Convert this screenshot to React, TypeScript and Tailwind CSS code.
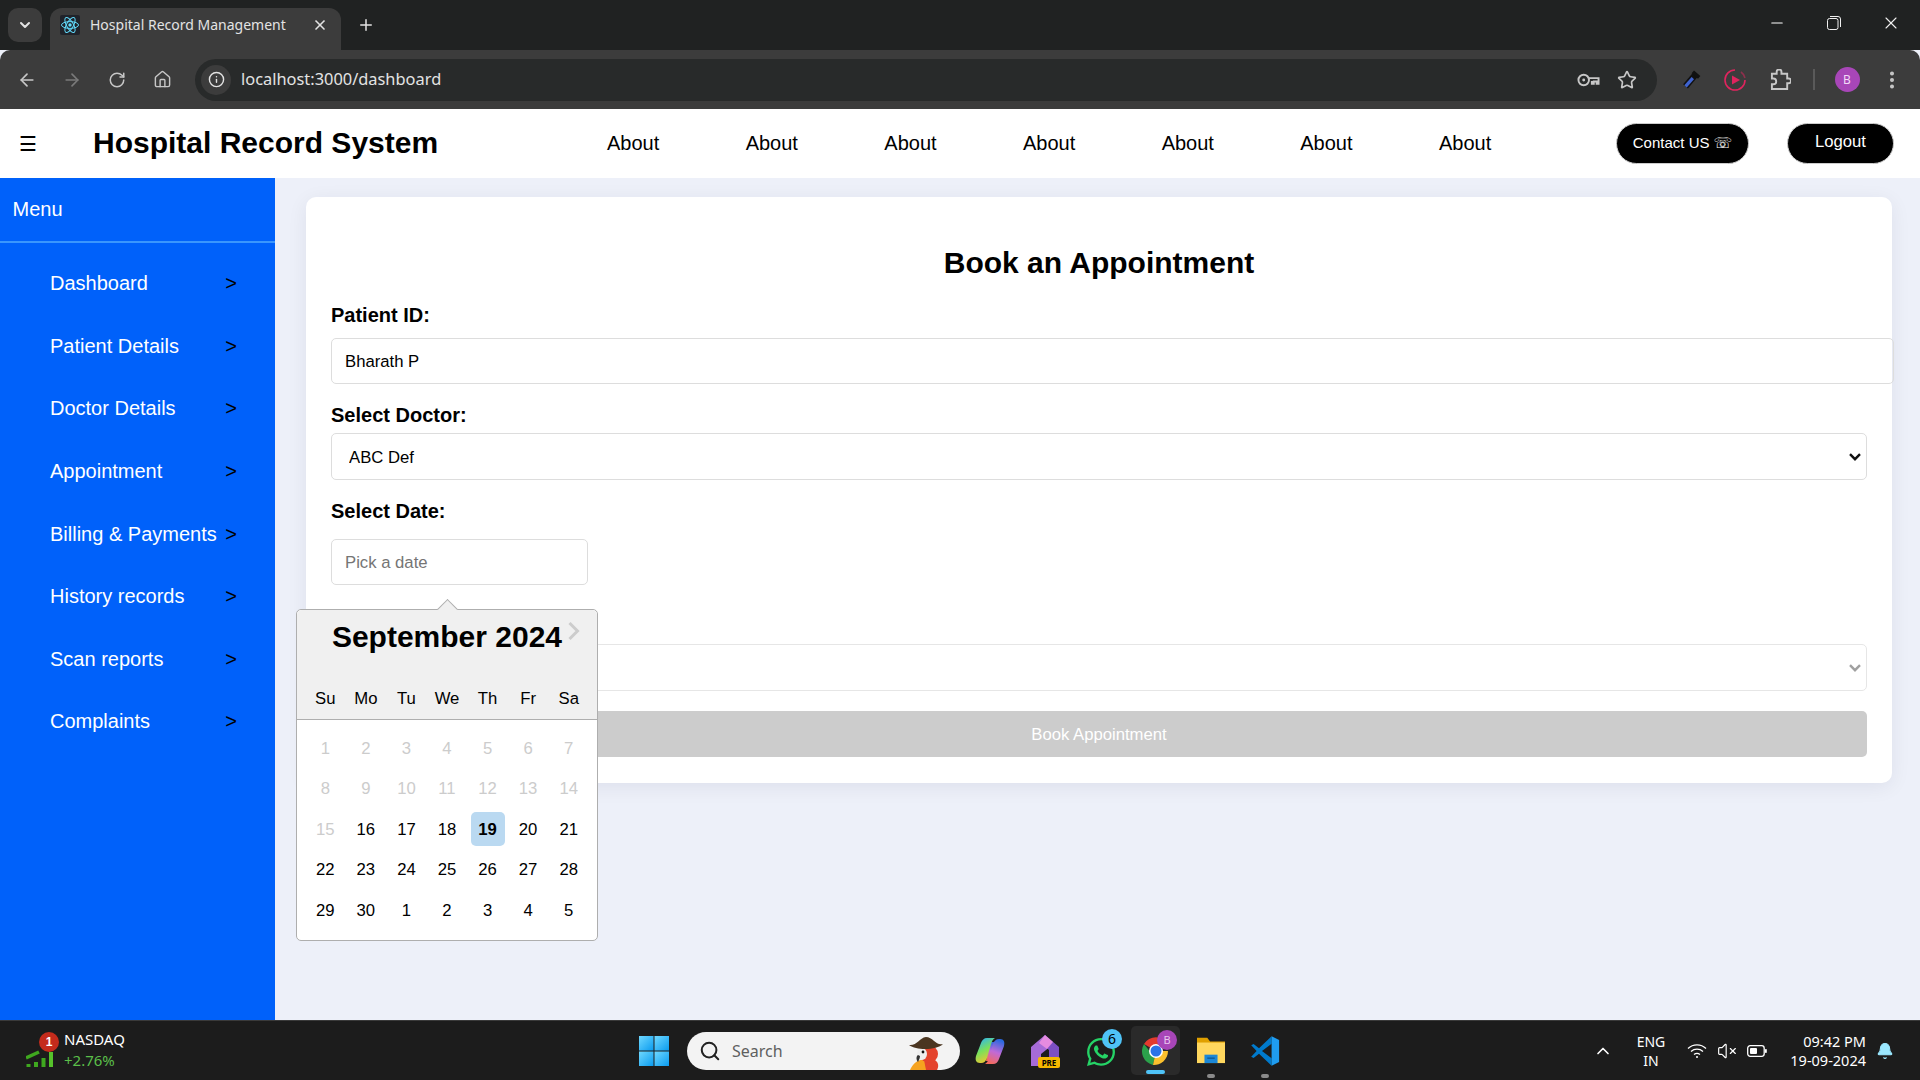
import React from 'react';
import { ArrowLeft, ArrowRight, RotateCw, Home, Info, Star, EllipsisVertical, X, Plus, ChevronDown, ChevronUp, Minus, Search, VolumeX, Bell } from 'lucide-react';
import { FaWhatsapp } from 'react-icons/fa';

const menuItems = ['Dashboard', 'Patient Details', 'Doctor Details', 'Appointment', 'Billing & Payments', 'History records', 'Scan reports', 'Complaints'];
const navItems = ['About', 'About', 'About', 'About', 'About', 'About', 'About'];
const dayNames = ['Su', 'Mo', 'Tu', 'We', 'Th', 'Fr', 'Sa'];
const days = [1, 2, 3, 4, 5, 6, 7, 8, 9, 10, 11, 12, 13, 14, 15, 16, 17, 18, 19, 20, 21, 22, 23, 24, 25, 26, 27, 28, 29, 30, 1, 2, 3, 4, 5];

const ReactFavicon = () => (
  <svg viewBox="0 0 20 20" className="w-5 h-5">
    <rect width="20" height="20" rx="2" fill="#20232a" />
    <g fill="none" stroke="#61dafb" strokeWidth="1">
      <ellipse cx="10" cy="10" rx="8.5" ry="3.4" />
      <ellipse cx="10" cy="10" rx="8.5" ry="3.4" transform="rotate(60 10 10)" />
      <ellipse cx="10" cy="10" rx="8.5" ry="3.4" transform="rotate(120 10 10)" />
    </g>
    <circle cx="10" cy="10" r="1.7" fill="#61dafb" />
  </svg>
);

const TabStrip = () => (
  <div className="h-[50px] bg-[#202222] flex items-end shrink-0">
    <div className="w-[34px] h-[34px] ml-[8px] mb-[8px] bg-[#3c3c3c] rounded-[10px] flex items-center justify-center">
      <ChevronDown className="w-4 h-4 text-[#e3e3e3]" strokeWidth={3} />
    </div>
    <div className="relative w-[291px] h-[42px] ml-[8px] bg-[#3c3c3c] rounded-t-[12px] flex items-center pl-[10px] pb-[8px]">
      <ReactFavicon />
      <span className="ml-[10px] text-[14px] leading-[20px] text-[#e3e3e3] font-['Noto_Sans'] whitespace-nowrap">Hospital Record Management</span>
      <X className="absolute left-[262px] top-[9px] w-[16px] h-[16px] text-[#e3e3e3]" strokeWidth={2.5} />
    </div>
    <Plus className="w-[18px] h-[18px] ml-[16px] mb-[16px] text-[#e3e3e3]" strokeWidth={2} />
    <div className="ml-auto flex items-center mb-[17px]">
      <Minus className="w-[18px] h-[18px] text-[#ffffff] mr-[41px]" strokeWidth={1.4} />
      <svg viewBox="0 0 14 14" className="w-[14px] h-[14px] mr-[40px]" fill="none" stroke="#f0f0f0" strokeWidth="1">
        <rect x="0.5" y="2.5" width="10.5" height="11" rx="2" />
        <path d="M3 .5h8a2.5 2.5 0 0 1 2.5 2.5v8" />
      </svg>
      <X className="w-[20px] h-[20px] text-[#f0f0f0] mr-[19px]" strokeWidth={1.3} />
    </div>
  </div>
);

const Toolbar = () => (
  <div className="h-[59px] bg-[#3c3c3c] flex items-center shrink-0 rounded-t-[10px]">
    <ArrowLeft className="w-[20px] h-[20px] ml-[17px] text-[#c7c7c7]" strokeWidth={2} />
    <ArrowRight className="w-[20px] h-[20px] ml-[25px] text-[#7a7a7a]" strokeWidth={2} />
    <RotateCw className="w-[18px] h-[18px] ml-[26px] text-[#c7c7c7]" strokeWidth={2} />
    <Home className="w-[19px] h-[19px] ml-[27px] text-[#c7c7c7]" strokeWidth={1.8} />
    <div className="w-[1462px] h-[42px] ml-[23px] bg-[#282a2a] rounded-full flex items-center pl-[6px] pr-[20px]">
      <div className="w-[30px] h-[30px] bg-[#3c3c3c] rounded-full flex items-center justify-center">
        <Info className="w-[17px] h-[17px] text-[#e3e3e3]" strokeWidth={2} />
      </div>
      <span className="ml-[10px] text-[#e3e3e3] text-[16.4px] font-['Noto_Sans']">localhost:3000/dashboard</span>
      <svg viewBox="0 0 24 14" className="w-[23px] h-[14px] ml-auto" fill="none" stroke="#c7c7c7" strokeWidth="2">
        <circle cx="7" cy="7" r="5.5" />
        <circle cx="7" cy="7" r="1.5" fill="#c7c7c7" stroke="none" />
        <path d="M12.5 5h10v6h-2V8.5h-3V11h-2V8" />
      </svg>
      <Star className="w-[20px] h-[20px] ml-[17px] text-[#c7c7c7]" strokeWidth={2} />
    </div>
    {/* extensions */}
    <svg viewBox="0 0 22 24" className="w-[20px] h-[22px] ml-[24px]" fill="none">
      <path d="M16 6L5 19" stroke="#111" strokeWidth="7" />
      <path d="M13 10L5 19" stroke="#3f63cf" strokeWidth="3.5" />
      <path d="M13 3l7 6" stroke="#111" strokeWidth="4" />
    </svg>
    <svg viewBox="0 0 22 22" className="w-[22px] h-[22px] ml-[23px]" fill="none">
      <path d="M11 1a10 10 0 1 0 10 10" stroke="#e0245e" strokeWidth="1.6" />
      <path d="M17 3a10 10 0 0 1 4 6" stroke="#e0245e" strokeWidth="1.6" opacity="0.5" />
      <path d="M8 6.5l8 4.5-8 4.5z" fill="#e0245e" />
    </svg>
    <svg viewBox="0 0 22 22" className="w-[21px] h-[21px] ml-[24px]" fill="none" stroke="#c7c7c7" strokeWidth="2">
      <path d="M2 5h5V3a2.5 2.5 0 0 1 5 0v2h6v5h1.5a2.5 2.5 0 0 1 0 5H18v6H2v-5h1.5a2.5 2.5 0 0 0 0-6H2z" />
    </svg>
    <div className="w-[1.5px] h-[21px] bg-[#5a5a5a] ml-[22px]" />
    <div className="w-[25px] h-[25px] ml-[20px] rounded-full bg-[#a846b8] flex items-center justify-center text-[12px] text-[#f3d9f7] font-['Noto_Sans']">B</div>
    <EllipsisVertical className="w-[22px] h-[22px] ml-[21px] text-[#c7c7c7]" strokeWidth={2.4} />
  </div>
);

const Header = () => (
  <div className="h-[69px] bg-white flex items-center shrink-0 text-black">
    <div className="w-[93px] pl-[19px] text-[20px] leading-none">☰</div>
    <h1 className="w-[514px] -mt-px text-[30px] font-bold leading-[36px] whitespace-nowrap">Hospital Record System</h1>
    <nav className="flex -mt-px gap-[86.4px] text-[20px]">
      {navItems.map((item, i) => (
        <a key={i}>{item}</a>
      ))}
    </nav>
    <button className="ml-auto w-[133px] h-[41px] rounded-full bg-black text-white text-[15px] flex items-center justify-center border border-[#ccc]">
      Contact US <span className="ml-1 text-[15px] font-['DejaVu_Sans']">☏</span>
    </button>
    <button className="ml-[38px] mr-[26px] w-[107px] h-[41px] rounded-full bg-black text-white text-[16.7px] pb-[3px] border border-[#ccc]">Logout</button>
  </div>
);

const Sidebar = () => (
  <aside className="w-[275px] bg-[#0061fa] text-white shrink-0">
    <div className="h-[65px] pl-[12.5px] flex items-center pb-[2px] text-[20px] border-b-2 border-[#3a96fd]">Menu</div>
    <ul className="mt-[9px]">
      {menuItems.map((item) => (
        <li key={item} className="h-[62.6px] pl-[50px] pr-[38px] flex items-center justify-between text-[20px] whitespace-nowrap">
          <span>{item}</span>
          <span className="text-black">&gt;</span>
        </li>
      ))}
    </ul>
  </aside>
);

const DatePopup = () => (
  <div className="absolute left-[-35px] top-[70px] z-10 w-[302px] h-[332px] bg-white border border-[#aeaeae] rounded-[5px] text-black">
    <div className="absolute left-[143px] top-[-8px] w-[15px] h-[15px] rotate-45 bg-[#f0f0f0] border-l border-t border-[#aeaeae]" />
    <div className="relative h-[110px] bg-[#f0f0f0] border-b border-[#aeaeae] rounded-t-[5px]">
      <div className="pt-[10px] text-[30px] font-bold leading-[34px] text-center">September 2024</div>
      <svg viewBox="0 0 12 20" className="absolute right-[17px] top-[11px] w-[13px] h-[20px]" fill="none" stroke="#ccc" strokeWidth="3">
        <path d="M2 2l8 8-8 8" />
      </svg>
      <div className="mt-[34.5px] px-[8px] grid grid-cols-7 text-[16.7px] leading-[20px] text-center">
        {dayNames.map((name) => (
          <div key={name}>{name}</div>
        ))}
      </div>
    </div>
    <div className="pt-[8px] px-[8px] grid grid-cols-7 auto-rows-[40.5px] text-[16.7px]">
      {days.map((day, i) => (
        <div key={i} className="flex items-center justify-center">
          <span
            className={
              i === 18
                ? 'w-[34px] h-[34px] flex items-center justify-center rounded-[5px] bg-[#bad9f1] font-bold'
                : i < 15
                ? 'text-[#ccc]'
                : ''
            }
          >
            {day}
          </span>
        </div>
      ))}
    </div>
  </div>
);

const SelectArrow = ({ color }: { color: string }) => (
  <svg viewBox="0 0 12 8" className="absolute right-[6px] top-[20px] w-[12px] h-[8px] pointer-events-none" fill="none" stroke={color} strokeWidth="2.4">
    <path d="M1 1.2l5 5 5-5" />
  </svg>
);

const AppointmentForm = () => (
  <div className="bg-white rounded-[10px] shadow-[0_4px_20px_rgba(0,0,60,0.07)] h-[586px] px-[25px] text-black">
    <h2 className="pt-[48px] text-[30px] font-bold leading-[36px] text-center">Book an Appointment</h2>
    <label className="block mt-[23px] text-[20px] font-bold leading-[23px]">Patient ID:</label>
    <input
      readOnly
      value="Bharath P"
      className="block mt-[11px] w-[calc(100%+27px)] h-[46px] px-[13px] pt-[2px] border border-[#ddd] rounded-[5px] text-[16.7px] outline-none"
    />
    <label className="block mt-[20px] text-[20px] font-bold leading-[23px]">Select Doctor:</label>
    <div className="relative mt-[6px]">
      <select className="block w-full h-[47px] px-[17px] pt-[2px] appearance-none border border-[#ddd] rounded-[5px] text-[16.7px] bg-white outline-none">
        <option>ABC Def</option>
      </select>
      <SelectArrow color="#111" />
    </div>
    <label className="block mt-[20px] text-[20px] font-bold leading-[23px]">Select Date:</label>
    <div className="relative mt-[16px] w-[257px]">
      <input
        readOnly
        placeholder="Pick a date"
        className="block w-full h-[46px] px-[13px] pt-[2px] border border-[#ddd] rounded-[5px] text-[16.7px] outline-none placeholder:text-[#757575]"
      />
      <DatePopup />
    </div>
    {/* the time label sits behind the open calendar */}
    <div className="mt-[29px] h-[23px]" />
    <div className="relative mt-[7px]">
      <select disabled className="block w-full h-[47px] px-[17px] appearance-none border border-[#e6e6e6] rounded-[5px] text-[16.7px] bg-white opacity-100 outline-none">
        <option></option>
      </select>
      <SelectArrow color="#a0a0a0" />
    </div>
    <button disabled className="block mt-[20px] w-full h-[46px] pt-[2px] bg-[#ccc] text-white text-[16.7px] rounded-[5px]">Book Appointment</button>
  </div>
);

const Taskbar = () => (
  <div className="h-[60px] bg-[#1c1c1c] border-t border-[#3a3a3a] flex items-center shrink-0 text-white">
    {/* stock widget */}
    <div className="relative w-[38px] h-[38px] ml-[26px] mr-0">
      <svg viewBox="0 0 28 18" className="absolute left-0 top-[17px] w-[28px] h-[18px]">
        <path d="M0 9l13-6" stroke="#3fa81f" strokeWidth="3.5" fill="none" />
        <rect x="0.5" y="15" width="4" height="3" fill="#3fa81f" />
        <rect x="8" y="13" width="4" height="5" fill="#3fa81f" />
        <rect x="15.5" y="9" width="4" height="9" fill="#3fa81f" />
        <rect x="23" y="3" width="4" height="15" fill="#56c22b" />
      </svg>
      <div className="absolute left-[13px] top-0 w-[20px] h-[20px] rounded-full bg-[#c42b1c] flex items-center justify-center text-[12px] font-bold">1</div>
    </div>
    <div className="w-[575px] font-['Noto_Sans'] text-[15px] leading-[21px] -mt-[2px]">
      <div>NASDAQ</div>
      <div className="text-[#5bbf4a]">+2.76%</div>
    </div>
    {/* start */}
    <svg viewBox="0 0 30 30" className="w-[30px] h-[30px]">
      <defs>
        <linearGradient id="win" x1="0" y1="0" x2="1" y2="1">
          <stop offset="0" stopColor="#6fd8ff" />
          <stop offset="1" stopColor="#0a9bef" />
        </linearGradient>
      </defs>
      <rect x="0" y="0" width="14.5" height="14.5" fill="url(#win)" />
      <rect x="15.5" y="0" width="14.5" height="14.5" fill="url(#win)" />
      <rect x="0" y="15.5" width="14.5" height="14.5" fill="url(#win)" />
      <rect x="15.5" y="15.5" width="14.5" height="14.5" fill="url(#win)" />
    </svg>
    {/* search */}
    <div className="relative w-[273px] h-[38px] ml-[18px] bg-[#f3f3f3] rounded-full flex items-center pl-[12px] text-[#5f5f5f] overflow-hidden">
      <Search className="w-[22px] h-[22px] text-[#222]" strokeWidth={2.2} />
      <span className="ml-[11px] text-[16px] font-['Noto_Sans']">Search</span>
      <svg viewBox="0 0 34 36" className="absolute left-[222px] top-[2px] w-[34px] h-[36px]">
        <path d="M10 36C10 26 24 22 28 28c2 3 1 6 0 8z" fill="#e4432d" />
        <path d="M1 36c3-7 9-11 14-10l2 10z" fill="#f6a31f" />
        <ellipse cx="20" cy="20" rx="9" ry="9" fill="#e4432d" />
        <ellipse cx="13" cy="20" rx="5" ry="6" fill="#eeeeee" />
        <circle cx="14" cy="18" r="1.4" fill="#111" />
        <path d="M9 21c-2 1-2 5 0 7 1-2 2-4 2-6z" fill="#333" />
        <path d="M0 11C8 12 10 4 17 3c7 0 10 9 17 7-6 6-26 7-34 1z" fill="#4b3621" />
      </svg>
    </div>
    {/* pinned apps */}
    <svg viewBox="0 0 30 30" className="w-[30px] h-[30px] ml-[15px]">
      <defs>
        <linearGradient id="cop1" x1="0.2" y1="0" x2="0.6" y2="1">
          <stop offset="0" stopColor="#2bb5f5" />
          <stop offset="0.5" stopColor="#7be05a" />
          <stop offset="1" stopColor="#f7c52c" />
        </linearGradient>
        <linearGradient id="cop2" x1="0.6" y1="0" x2="0.3" y2="1">
          <stop offset="0" stopColor="#2a6ae0" />
          <stop offset="0.5" stopColor="#c06ad8" />
          <stop offset="1" stopColor="#f56a5b" />
        </linearGradient>
      </defs>
      <path d="M14 6h9l-3 19h-9z" fill="url(#cop2)" />
      <path d="M12 2h8c-2 1-3 3-4 6l-4 14c-1 3-3 5-6 5H5C1 27 0 24 1 20L6 7c1-3 3-5 6-5z" fill="url(#cop1)" />
      <path d="M18 28h-8c2-1 3-3 4-6l4-14c1-3 3-5 6-5h1c4 0 5 3 4 7l-5 13c-1 3-3 5-6 5z" fill="url(#cop2)" />
    </svg>
    <div className="relative w-[32px] h-[34px] ml-[25px]">
      <svg viewBox="0 0 30 34" className="w-[30px] h-[34px]">
        <path d="M15 1L1 13v19h10V20l10-8z" fill="#a66bd8" />
        <path d="M15 1l14 12v19H19V16l-6-5z" fill="#7d4fc4" />
        <path d="M15 1l8 7-6 7-8-6z" fill="#e58be0" />
      </svg>
      <div className="absolute left-[8px] bottom-0 w-[22px] h-[11px] bg-[#f5b800] rounded-[2px] text-[8px] leading-[11px] font-bold text-black text-center font-['Noto_Sans']">PRE</div>
    </div>
    <div className="relative w-[32px] h-[34px] ml-[23px]">
      <FaWhatsapp className="w-[32px] h-[32px] mt-[2px] text-[#25d366]" />
      <div className="absolute left-[17px] top-[-5px] w-[20px] h-[20px] rounded-full bg-[#4fc3f7] text-black text-[14px] leading-[20px] text-center font-['Noto_Sans']">6</div>
    </div>
    <div className="relative w-[49px] h-[49px] ml-[14px] bg-[#2a2a2a] rounded-[5px] flex items-center justify-center">
      <svg viewBox="0 0 30 30" className="w-[30px] h-[30px]">
        <path d="M15 15L3 8a14 14 0 0 1 24 0H15z" fill="#e33b2e" />
        <path d="M15 15l-6.500 0L3 8a14 14 0 0 0 9 21z" fill="#2ba14b" />
        <path d="M15 15h12a14 14 0 0 1-15 14z" fill="#fbc02d" />
        <circle cx="15" cy="15" r="7" fill="#fff" />
        <circle cx="15" cy="15" r="5.500" fill="#2a73e8" />
      </svg>
      <div className="absolute left-[26px] top-[4px] w-[20px] h-[20px] rounded-full bg-[#a846b8] text-[#e9c5ef] text-[11px] leading-[20px] text-center font-['Noto_Sans']">B</div>
      <div className="absolute left-[15px] bottom-[1px] w-[19px] h-[4px] rounded-full bg-[#4fc3f7]" />
    </div>
    <div className="relative w-[30px] h-[30px] ml-[16px]">
      <svg viewBox="0 0 30 30" className="w-[30px] h-[28px]">
        <path d="M0 2h11l3 4h16v2H0z" fill="#e0a000" />
        <rect x="0" y="7" width="30" height="22" fill="#ffd75e" />
        <rect x="8" y="20" width="14" height="9" fill="#1b87d6" />
        <rect x="11" y="23" width="8" height="1.500" fill="#0d5a96" />
      </svg>
      <div className="absolute left-[11px] top-[38px] w-[8px] h-[4px] rounded-full bg-[#8a8a8a]" />
    </div>
    <div className="relative w-[32px] h-[30px] ml-[23px]">
      <svg viewBox="0 0 100 100" className="w-[32px] h-[30px]">
        <path d="M72 1L30 41 12 27 4 31l18 19L4 69l8 4 18-14 42 40V74L40 50l32-24z" fill="#007acc" />
        <path d="M72 1l25 12v74L72 99z" fill="#1f9cf0" />
      </svg>
      <div className="absolute left-[12px] top-[38px] w-[8px] h-[4px] rounded-full bg-[#8a8a8a]" />
    </div>
    {/* tray */}
    <ChevronUp className="w-[20px] h-[20px] ml-[312px] text-white" strokeWidth={2} />
    <div className="w-[40px] ml-[18px] text-center font-['Noto_Sans'] text-[14px] leading-[19px]">
      <div>ENG</div>
      <div>IN</div>
    </div>
    <svg viewBox="0 0 20 16" className="w-[20px] h-[16px] ml-[16px]" fill="none" stroke="#fff" strokeWidth="1.300">
      <path d="M1 5.500a13 13 0 0 1 18 0" />
      <path d="M4 8.500a9 9 0 0 1 12 0" />
      <path d="M7 11.500a5 5 0 0 1 6 0" />
      <circle cx="10" cy="14" r="1" fill="#fff" stroke="none" />
    </svg>
    <VolumeX className="w-[20px] h-[20px] ml-[10px] text-white" strokeWidth={1.4} />
    <svg viewBox="0 0 20 12" className="w-[20px] h-[12px] ml-[10px]" fill="none">
      <rect x="0.7" y="0.7" width="16.500" height="10.600" rx="2.500" stroke="#fff" strokeWidth="1.300" />
      <rect x="3" y="3" width="7" height="6" rx="1" fill="#fff" />
      <rect x="18" y="4" width="1.800" height="4" rx="0.800" fill="#fff" />
    </svg>
    <div className="w-[88px] ml-[11px] text-right font-['Noto_Sans'] text-[14.5px] leading-[19px] whitespace-nowrap">
      <div>09:42 PM</div>
      <div>19-09-2024</div>
    </div>
    <Bell className="w-[18px] h-[20px] ml-[10px] text-[#9be8ff] fill-[#9be8ff]" strokeWidth={1.5} />
  </div>
);

const App: React.FC = () => {
  return (
    <div className="w-full h-screen flex flex-col overflow-hidden bg-[#edf0f9] font-['Liberation_Sans',Arial,sans-serif]">
      <TabStrip />
      <Toolbar />
      <Header />
      <div className="flex-1 flex min-h-0">
        <Sidebar />
        <main className="flex-1 pl-[31px] pr-[28px] pt-[19px]">
          <AppointmentForm />
        </main>
      </div>
      <Taskbar />
    </div>
  );
};

export default App;
